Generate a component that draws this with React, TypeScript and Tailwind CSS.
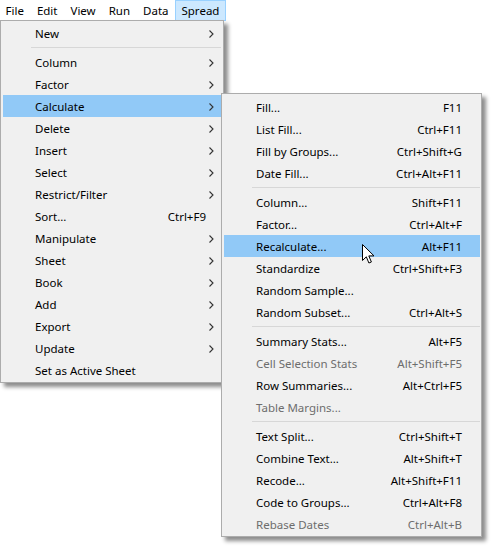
import { ReactNode } from "react";

type Item =
  | { sep: true }
  | { label: string; shortcut?: string; sub?: boolean; active?: boolean; disabled?: boolean; sep?: false };

const topMenus = ["File", "Edit", "View", "Run", "Data", "Spread"];

const spreadItems: Item[] = [
  { label: "New", sub: true },
  { sep: true },
  { label: "Column", sub: true },
  { label: "Factor", sub: true },
  { label: "Calculate", sub: true, active: true },
  { label: "Delete", sub: true },
  { label: "Insert", sub: true },
  { label: "Select", sub: true },
  { label: "Restrict/Filter", sub: true },
  { label: "Sort...", shortcut: "Ctrl+F9" },
  { label: "Manipulate", sub: true },
  { label: "Sheet", sub: true },
  { label: "Book", sub: true },
  { label: "Add", sub: true },
  { label: "Export", sub: true },
  { label: "Update", sub: true },
  { label: "Set as Active Sheet" },
];

const calculateItems: Item[] = [
  { label: "Fill...", shortcut: "F11" },
  { label: "List Fill...", shortcut: "Ctrl+F11" },
  { label: "Fill by Groups...", shortcut: "Ctrl+Shift+G" },
  { label: "Date Fill...", shortcut: "Ctrl+Alt+F11" },
  { sep: true },
  { label: "Column...", shortcut: "Shift+F11" },
  { label: "Factor...", shortcut: "Ctrl+Alt+F" },
  { label: "Recalculate...", shortcut: "Alt+F11", active: true },
  { label: "Standardize", shortcut: "Ctrl+Shift+F3" },
  { label: "Random Sample..." },
  { label: "Random Subset...", shortcut: "Ctrl+Alt+S" },
  { sep: true },
  { label: "Summary Stats...", shortcut: "Alt+F5" },
  { label: "Cell Selection Stats", shortcut: "Alt+Shift+F5", disabled: true },
  { label: "Row Summaries...", shortcut: "Alt+Ctrl+F5" },
  { label: "Table Margins...", disabled: true },
  { sep: true },
  { label: "Text Split...", shortcut: "Ctrl+Shift+T" },
  { label: "Combine Text...", shortcut: "Alt+Shift+T" },
  { label: "Recode...", shortcut: "Alt+Shift+F11" },
  { label: "Code to Groups...", shortcut: "Ctrl+Alt+F8" },
  { label: "Rebase Dates", shortcut: "Ctrl+Alt+B", disabled: true },
];

function Chevron() {
  return (
    <svg width="5" height="8" viewBox="0 0 5 8" className="block">
      <path d="M0.5 0.5 L4 4 L0.5 7.5" fill="none" stroke="#333" strokeWidth="1.1" />
    </svg>
  );
}

function Cursor() {
  return (
    <svg width="13" height="21" viewBox="0 0 13 21" className="block">
      <path
        d="M0.5 0.5 L0.5 16.5 L4.3 12.8 L6.9 19 L9.4 18 L6.8 11.9 L12 11.9 Z"
        fill="#fff"
        stroke="#000"
        strokeWidth="1"
        strokeLinejoin="round"
      />
    </svg>
  );
}

function MenuList({ items, chevrons, extra }: { items: Item[]; chevrons: boolean; extra?: ReactNode }) {
  return (
    <div className="flex flex-col">
      {items.map((item, i) =>
        item.sep ? (
          <div key={i} className="h-[7px] pt-[3px] pl-[28px]">
            <div className="h-px bg-[#d7d7d7]" />
          </div>
        ) : (
          <div
            key={i}
            className={`relative flex h-[22px] items-center pt-[2px] ${item.active ? "bg-[#91c9f7]" : ""} ${
              item.disabled ? "text-[#6d6d6d]" : "text-black"
            }`}
          >
            <span className="flex-1 pl-[32px] whitespace-nowrap">{item.label}</span>
            {item.shortcut && <span className="whitespace-nowrap">{item.shortcut}</span>}
            {chevrons ? (
              <span className="flex w-[15px] justify-end pr-[7px]">{item.sub && <Chevron />}</span>
            ) : (
              <span className="w-[18px]" />
            )}
            {item.active && extra}
          </div>
        )
      )}
    </div>
  );
}

export default function App() {
  return (
    <div
      className="relative h-[548px] w-[498px] overflow-hidden bg-white text-[11.5px] leading-none"
      style={{ fontFamily: '"Noto Sans", "Segoe UI", sans-serif' }}
    >
      {/* menu bar */}
      <div className="flex h-[21px] items-stretch -ml-px">
        {topMenus.map((m) => (
          <div
            key={m}
            className={`flex items-center border px-[5.5px] ${
              m === "Spread" ? "border-[#99d1ff] bg-[#cce8ff]" : "border-transparent"
            }`}
          >
            {m}
          </div>
        ))}
      </div>

      {/* Spread dropdown */}
      <div className="absolute left-0 top-[20px] w-[224px] border border-[#acacac] bg-[#f0f0f0] px-[2px] py-[1px] shadow-[4px_4px_4px_rgba(0,0,0,0.45)]">
        <MenuList items={spreadItems} chevrons />
      </div>

      {/* Calculate submenu */}
      <div className="absolute left-[221px] top-[93px] w-[261px] border border-[#acacac] bg-[#f0f0f0] pl-[2px] pr-px pt-[2px] pb-px shadow-[4px_4px_4px_rgba(0,0,0,0.45)]">
        <MenuList
          items={calculateItems}
          chevrons={false}
          extra={
            <div className="absolute left-[138px] top-[9px]">
              <Cursor />
            </div>
          }
        />
      </div>
    </div>
  );
}
